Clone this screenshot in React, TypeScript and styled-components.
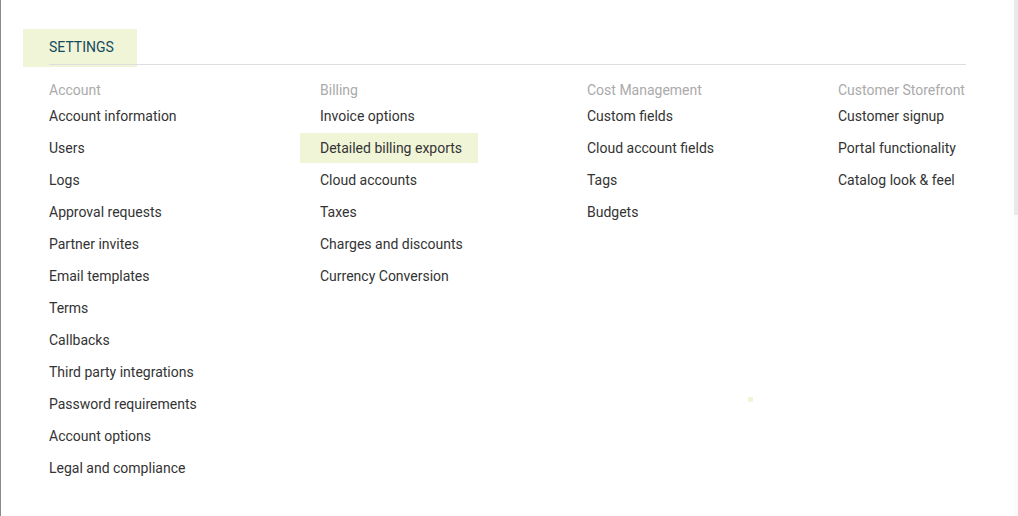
import React from 'react'
import styled, { createGlobalStyle } from 'styled-components'

const GlobalStyle = createGlobalStyle`
  html, body {
    margin: 0;
    padding: 0;
    background: #ffffff;
  }
  body {
    font-family: Roboto, "Liberation Sans", Arial, sans-serif;
    -webkit-font-smoothing: antialiased;
  }
`

const Frame = styled.div`
  display: flex;
  width: 1018px;
  height: 516px;
  overflow: hidden;
  border-left: 1px solid #8a8a8a;
  box-sizing: border-box;
  position: relative;
`

const Main = styled.main`
  flex: 1;
  padding: 29px 0 0 22px;
`

const Scrollbar = styled.div`
  width: 4px;
  background: #fafafa;
  display: flex;
  flex-direction: column;
`

const Thumb = styled.div`
  height: 215px;
  background: #e9e9e9;
`

const Header = styled.div`
  width: 943px;
`

const Tab = styled.div`
  display: inline-block;
  height: 38px;
  line-height: 36px;
  padding: 0 23px 0 26px;
  background: #f1f5d8;
  color: #134a5d;
  font-size: 14px;
`

const Rule = styled.div`
  position: relative;
  height: 1px;
  margin: -3px 0 0 26px;
  background: #dedede;
`

const Columns = styled.div`
  display: grid;
  grid-template-columns: 271px 267px 251px auto;
  padding: 15px 0 0 26px;
`

const Column = styled.div`
  display: flex;
  flex-direction: column;
  align-items: flex-start;
  gap: 2px;
`

const Heading = styled.div`
  height: 20px;
  line-height: 20px;
  font-size: 14px;
  color: #aaaaaa;
  margin-bottom: -1px;
`

const Item = styled.a<{ $active?: boolean }>`
  display: block;
  height: 30px;
  line-height: 30px;
  font-size: 14px;
  color: #333333;
  text-decoration: none;
  white-space: nowrap;
  margin-left: -20px;
  padding: 0 16px 0 20px;
  background: ${(p) => (p.$active ? '#f1f5d8' : 'transparent')};
`

const Speck = styled.span`
  position: absolute;
  left: 747px;
  top: 397px;
  width: 5px;
  height: 5px;
  background: #f1f5d8;
`

const sections = [
  {
    title: 'Account',
    items: [
      'Account information',
      'Users',
      'Logs',
      'Approval requests',
      'Partner invites',
      'Email templates',
      'Terms',
      'Callbacks',
      'Third party integrations',
      'Password requirements',
      'Account options',
      'Legal and compliance',
    ],
  },
  {
    title: 'Billing',
    items: [
      'Invoice options',
      'Detailed billing exports',
      'Cloud accounts',
      'Taxes',
      'Charges and discounts',
      'Currency Conversion',
    ],
  },
  {
    title: 'Cost Management',
    items: ['Custom fields', 'Cloud account fields', 'Tags', 'Budgets'],
  },
  {
    title: 'Customer Storefront',
    items: ['Customer signup', 'Portal functionality', 'Catalog look & feel'],
  },
]

const App = () => {
  return (
    <>
      <GlobalStyle />
      <Frame>
        <Main>
          <Header>
            <Tab>SETTINGS</Tab>
            <Rule />
          </Header>
          <Columns>
            {sections.map((section) => (
              <Column key={section.title}>
                <Heading>{section.title}</Heading>
                {section.items.map((item) => (
                  <Item key={item} $active={item === 'Detailed billing exports'}>
                    {item}
                  </Item>
                ))}
              </Column>
            ))}
          </Columns>
        </Main>
        <Scrollbar>
          <Thumb />
        </Scrollbar>
        <Speck />
      </Frame>
    </>
  )
}

export default App
